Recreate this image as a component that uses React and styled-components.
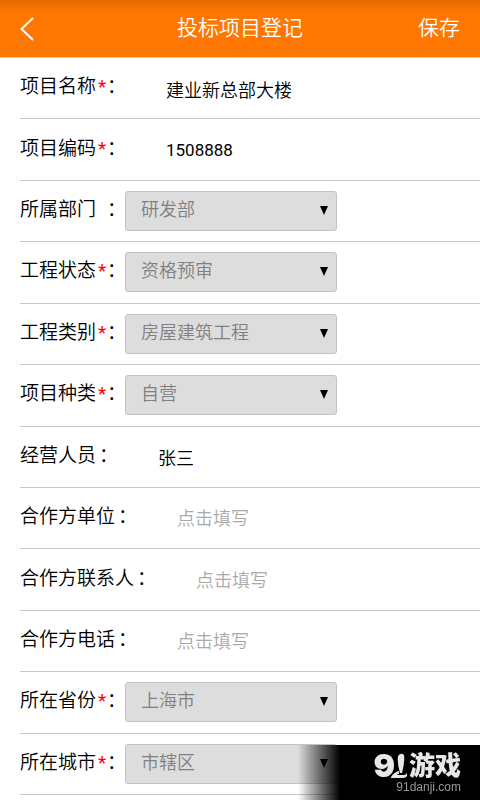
import React, { useState } from "react";
import styled, { createGlobalStyle } from "styled-components";

const GlobalStyle = createGlobalStyle`
  * {
    box-sizing: border-box;
  }
  body {
    margin: 0;
    background-color: white;
    color: #000;
    font-family: Roboto, "Noto Sans CJK SC", sans-serif;
    font-weight: 350;
  }
  button, input, select {
    font: inherit;
    color: inherit;
  }
`;
const Page = styled.div`
  display: flex;
  flex-direction: column;
  min-height: 100vh;
  padding-bottom: 5px;
`;
const Header = styled.header`
  display: grid;
  grid-template-columns: 1fr auto 1fr;
  align-items: center;
  height: 58px;
  padding: 0 20px 3px;
  background: linear-gradient(#e26a00, #ff7700 12px);
  border-bottom: 1px solid #d8cfc6;
  color: white;
`;
const Title = styled.h1`
  margin: 0;
  padding-bottom: 2px;
  font-size: 21px;
  font-weight: 350;
`;
const HeaderButton = styled.button`
  display: flex;
  justify-self: ${(props) => props.$side};
  padding: 0 0 2px;
  border: none;
  background: none;
  font-size: 21px;
  cursor: pointer;
`;
const BackIcon = styled.svg`
  width: 14px;
  height: 24px;
  margin-top: 5px;
  fill: none;
  stroke: white;
  stroke-width: 2;
`;
const Form = styled.form`
  flex: 1;
  display: flex;
  flex-direction: column;
  padding-left: 20px;
`;
const Row = styled.div`
  flex: 1 0 56px;
  display: flex;
  align-items: center;
  border-bottom: 1px solid #c8c8c8;
`;
const Label = styled.label`
  display: flex;
  flex-shrink: 0;
  padding-bottom: 2px;
  font-size: 19px;
  line-height: 28px;
  white-space: nowrap;
`;
const Mark = styled.span`
  width: ${(props) => (props.$wide ? "11px" : "3px")};
  padding-left: 2px;
  color: #ff0000;
  font-weight: 400;
`;
const Colon = styled.span`
  width: 18px;
`;
const TextInput = styled.input`
  flex: 1;
  min-width: 0;
  height: 40px;
  padding: 1px 0 0 41px;
  border: none;
  outline: none;
  background: none;
  font-size: 18px;
  &::placeholder {
    color: #a9a9a9;
    opacity: 1;
  }
  &[inputmode="numeric"] {
    font-size: 17px;
    font-weight: 400;
  }
`;
const SelectBox = styled.div`
  position: relative;
  width: 46%;
`;
const Select = styled.select`
  display: block;
  width: 100%;
  height: 40px;
  padding: 0 30px 3px 15px;
  appearance: none;
  border: 1px solid #c3c3c3;
  border-radius: 3px;
  background-color: #ddd;
  color: #808080;
  font-size: 18px;
`;
const Arrow = styled.svg`
  position: absolute;
  top: 15px;
  right: 9px;
  width: 8px;
  height: 9px;
  pointer-events: none;
`;
const Watermark = styled.div`
  position: fixed;
  right: 0;
  bottom: 0;
  display: flex;
  flex-direction: column;
  align-items: flex-end;
  width: 182px;
  height: 55px;
  padding: 7px 19px 0 0;
  background: linear-gradient(to right, transparent, black 42px);
  color: #e8e8e8;
`;
const Brand = styled.div`
  display: flex;
  align-items: center;
  height: 27px;
  font-size: 26px;
  font-weight: 900;
  line-height: 26px;
`;
const Nine = styled.span`
  font-family: Inter, sans-serif;
  font-size: 32px;
`;
const OneMark = styled.svg`
  width: 16px;
  height: 25px;
  margin-left: -4px;
  margin-right: 2px;
  fill: #e8e8e8;
`;
const Site = styled.div`
  color: #999;
  font-family: "Liberation Sans", sans-serif;
  font-size: 12px;
  font-weight: 400;
  line-height: 16px;
`;

const fields = [
  { id: "name", label: "项目名称", required: true, value: "建业新总部大楼" },
  { id: "code", label: "项目编码", required: true, value: "1508888", numeric: true },
  { id: "dept", label: "所属部门", wide: true, options: ["研发部"] },
  { id: "status", label: "工程状态", required: true, options: ["资格预审"] },
  { id: "category", label: "工程类别", required: true, options: ["房屋建筑工程"] },
  { id: "kind", label: "项目种类", required: true, options: ["自营"] },
  { id: "manager", label: "经营人员", value: "张三" },
  { id: "partner", label: "合作方单位", value: "" },
  { id: "contact", label: "合作方联系人", value: "" },
  { id: "phone", label: "合作方电话", value: "" },
  { id: "province", label: "所在省份", required: true, options: ["上海市"] },
  { id: "city", label: "所在城市", required: true, options: ["市辖区"] },
];

function Field({ field }) {
  const [value, updateValue] = useState(field.options ? field.options[0] : field.value);
  const onChange = (e) => updateValue(e.target.value);

  return (
    <Row>
      <Label htmlFor={field.id}>
        {field.label}
        <Mark $wide={field.required || field.wide}>{field.required && "*"}</Mark>
        <Colon>：</Colon>
      </Label>
      {field.options ? (
        <SelectBox>
          <Select id={field.id} value={value} onChange={onChange}>
            {field.options.map((option) => (
              <option key={option}>{option}</option>
            ))}
          </Select>
          <Arrow viewBox="0 0 8 9">
            <path d="M0 0h8L4 9z" />
          </Arrow>
        </SelectBox>
      ) : (
        <TextInput
          id={field.id}
          inputMode={field.numeric ? "numeric" : "text"}
          placeholder="点击填写"
          value={value}
          onChange={onChange}
        />
      )}
    </Row>
  );
}

function App() {
  return (
    <Page>
      <GlobalStyle />
      <Header>
        <HeaderButton type="button" $side="start" aria-label="返回">
          <BackIcon viewBox="0 0 14 24">
            <path d="M13 1L1.500 12L13 23" />
          </BackIcon>
        </HeaderButton>
        <Title>投标项目登记</Title>
        <HeaderButton type="submit" form="project" $side="end">
          保存
        </HeaderButton>
      </Header>
      <Form id="project" onSubmit={(e) => e.preventDefault()}>
        {fields.map((field) => (
          <Field key={field.id} field={field} />
        ))}
      </Form>
      <Watermark>
        <Brand>
          <Nine>9</Nine>
          <OneMark viewBox="0 0 16 25">
            <path d="M7 3Q10-1 13 2Q14 9 11 20H9Q6 10 7 3Z" />
            <path d="M0 24Q3 19 8 18V21Q6 21 6 22H14L16 20V23Q15 25 12 25H0Z" />
          </OneMark>
          游戏
        </Brand>
        <Site>91danji.com</Site>
      </Watermark>
    </Page>
  );
}

export default App;
